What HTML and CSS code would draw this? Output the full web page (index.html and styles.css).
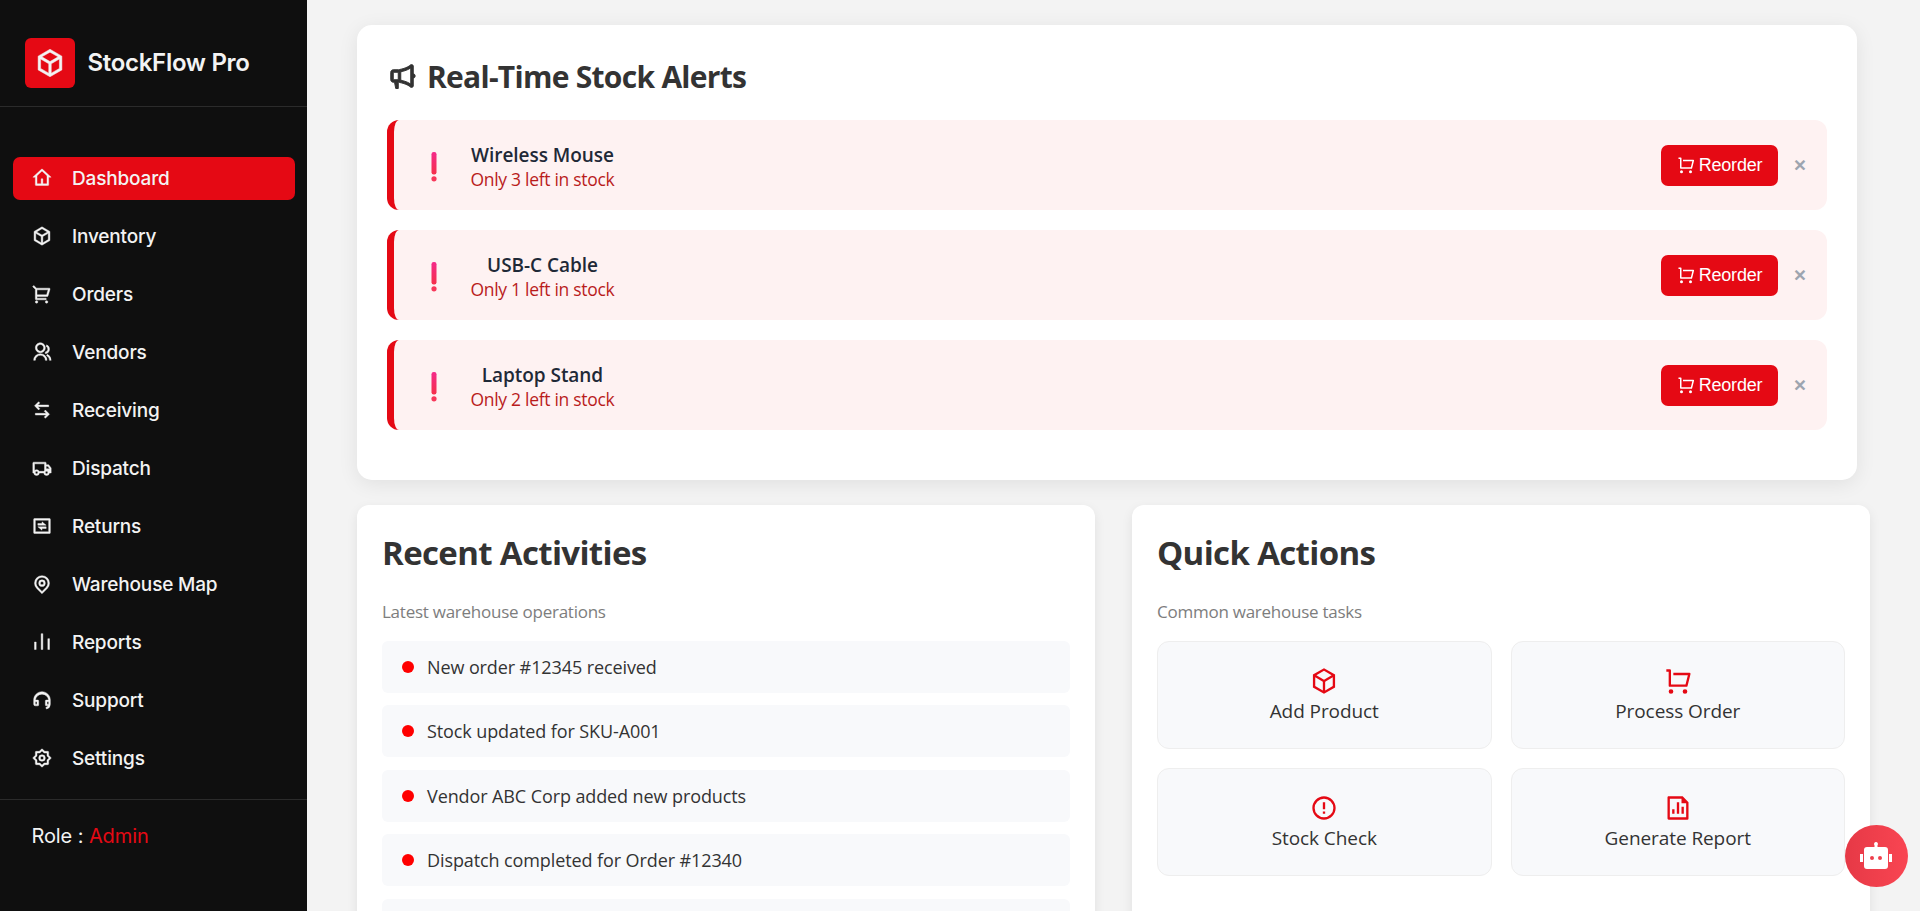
FILE: index.html
```html
<!DOCTYPE html>
<html lang="en">
<head>
<meta charset="utf-8">
<title>StockFlow Pro</title>
<link rel="stylesheet" href="styles.css">
</head>
<body>
<svg class="sprite" aria-hidden="true">
  <symbol id="box" viewBox="0 0 24 24"><path d="M12 1L21.5 6.5V17.5L12 23L2.5 17.5V6.5L12 1ZM5.494 7.078L12 10.844L18.506 7.078L12 3.311L5.494 7.078ZM4.5 8.813V16.347L11 20.11V12.577L4.5 8.813ZM13 20.11L19.5 16.347V8.813L13 12.577V20.11Z"/></symbol>
  <symbol id="home" viewBox="0 0 24 24"><path d="M19 21H5a1 1 0 0 1-1-1v-9H1l10.327-9.388a1 1 0 0 1 1.346 0L23 11h-3v9a1 1 0 0 1-1 1zm-6-2h5V9.157l-6-5.454-6 5.454V19h5v-6h2v6z"/></symbol>
  <symbol id="cart" viewBox="0 0 24 24"><path d="M4 6.414L.757 3.172l1.415-1.415L5.414 5h15.242a1 1 0 0 1 .958 1.287l-2.4 8a1 1 0 0 1-.958.713H6v2h11v2H5a1 1 0 0 1-1-1V6.414zM6 7v6h11.512l1.8-6H6zm-.5 16a1.5 1.5 0 1 1 0-3 1.5 1.5 0 0 1 0 3zm12 0a1.5 1.5 0 1 1 0-3 1.5 1.5 0 0 1 0 3z"/></symbol>
  <symbol id="cart2" viewBox="0 0 24 24"><path d="M4 16V4H2V2h3a1 1 0 0 1 1 1v12h12.438l2-8H8V5h13.72a1 1 0 0 1 .97 1.243l-2.5 10a1 1 0 0 1-.97.757H5a1 1 0 0 1-1-1zm2 7a2 2 0 1 1 0-4 2 2 0 0 1 0 4zm12 0a2 2 0 1 1 0-4 2 2 0 0 1 0 4z"/></symbol>
  <symbol id="group" viewBox="0 0 24 24"><path d="M2 22a8 8 0 1 1 16 0h-2a6 6 0 1 0-12 0H2zm8-9c-3.315 0-6-2.685-6-6s2.685-6 6-6 6 2.685 6 6-2.685 6-6 6zm0-2c2.21 0 4-1.79 4-4s-1.79-4-4-4-4 1.79-4 4 1.79 4 4 4zm8.284 3.703A8.002 8.002 0 0 1 23 22h-2a6.001 6.001 0 0 0-3.537-5.473l.82-1.824zm-.688-11.29A5.5 5.5 0 0 1 21 8.5a5.499 5.499 0 0 1-5 5.478v-2.013a3.5 3.5 0 0 0 1.041-6.609l.555-1.943z"/></symbol>
  <symbol id="arrows" viewBox="0 0 24 24"><path d="M16.05 12.05L21 17l-4.95 4.95-1.414-1.415L17.172 18H4v-2h13.172l-2.536-2.536L16.05 12.05zM7.95 2.05l1.414 1.414L6.828 6H20v2H6.828l2.536 2.535L7.95 11.95 3 7l4.95-4.95z"/></symbol>
  <symbol id="truck" viewBox="0 0 24 24"><path d="M8.965 18a3.5 3.5 0 0 1-6.93 0H1V6a1 1 0 0 1 1-1h14a1 1 0 0 1 1 1v2h3l3 4.056V18h-2.035a3.5 3.5 0 0 1-6.93 0h-5.07zM15 7H3v8.05a3.5 3.5 0 0 1 5.663.95h5.674c.168-.353.393-.674.663-.95V7zm2 6h4v-.285L18.992 10H17v3zm.5 6a1.5 1.5 0 1 0 0-3.001 1.5 1.5 0 0 0 0 3.001zM7 17.5a1.5 1.5 0 1 0-3 0 1.5 1.5 0 0 0 3 0z"/></symbol>
  <symbol id="exchange" viewBox="0 0 24 24"><path d="M3 3h18a1 1 0 0 1 1 1v16a1 1 0 0 1-1 1H3a1 1 0 0 1-1-1V4a1 1 0 0 1 1-1zm1 2v14h16V5H4zm8 4V7l5 4H7V9h5zm-5 4h10v2h-5v2l-5-4z"/></symbol>
  <symbol id="pin" viewBox="0 0 24 24"><path d="M12 23.728l-6.364-6.364a9 9 0 1 1 12.728 0L12 23.728zm4.95-7.778a7 7 0 1 0-9.9 0L12 20.9l4.95-4.95zM12 15a4 4 0 1 1 0-8 4 4 0 0 1 0 8zm0-2a2 2 0 1 0 0-4 2 2 0 0 0 0 4z"/></symbol>
  <symbol id="bars" viewBox="0 0 24 24"><path d="M3 12h2v9H3v-9zm16-4h2v13h-2V8zm-8-6h2v19h-2V2z"/></symbol>
  <symbol id="headset" viewBox="0 0 24 24"><path d="M22 17.002a6.002 6.002 0 0 1-4.713 5.86l-.638-1.914A4.003 4.003 0 0 0 19.465 19H17a1 1 0 0 1-1-1v-5a1 1 0 0 1 1-1h2.938a8.001 8.001 0 0 0-15.876 0H7a1 1 0 0 1 1 1v5a1 1 0 0 1-1 1H4a2 2 0 0 1-2-2v-5C2 6.477 6.477 2 12 2s10 4.477 10 10v5.002zM20 17v-3h-2v3h2zM4 14v3h2v-3H4z"/></symbol>
  <symbol id="gear" viewBox="0 0 24 24"><path d="M8.686 4l2.607-2.607a1 1 0 0 1 1.414 0L15.314 4H19a1 1 0 0 1 1 1v3.686l2.607 2.607a1 1 0 0 1 0 1.414L20 15.314V19a1 1 0 0 1-1 1h-3.686l-2.607 2.607a1 1 0 0 1-1.414 0L8.686 20H5a1 1 0 0 1-1-1v-3.686l-2.607-2.607a1 1 0 0 1 0-1.414L4 8.686V5a1 1 0 0 1 1-1h3.686zM6 6v3.515L3.515 12 6 14.485V18h3.515L12 20.485 14.485 18H18v-3.515L20.485 12 18 9.515V6h-3.515L12 3.515 9.515 6H6zm6 10a4 4 0 1 1 0-8 4 4 0 0 1 0 8zm0-2a2 2 0 1 0 0-4 2 2 0 0 0 0 4z"/></symbol>
  <symbol id="megaphone" viewBox="0 0 24 24"><path d="M9 17C9 17 16 18 19 21H20C20.552 21 21 20.552 21 20V13.937C21.863 13.715 22.5 12.932 22.5 12C22.5 11.068 21.863 10.285 21 10.063V4C21 3.448 20.552 3 20 3H19C16 6 9 7 9 7H5C3.895 7 3 7.895 3 9V15C3 16.105 3.895 17 5 17H6L7 22H9V17ZM11 8.661C11.683 8.515 12.528 8.312 13.439 8.044C15.118 7.55 17.25 6.773 19 5.575V18.425C17.25 17.227 15.118 16.45 13.439 15.956C12.528 15.688 11.683 15.485 11 15.339V8.661ZM5 9H9V15H5V9Z"/></symbol>
  <symbol id="warning" viewBox="0 0 24 24"><path d="M12 22C6.477 22 2 17.523 2 12S6.477 2 12 2s10 4.477 10 10-4.477 10-10 10zm0-2a8 8 0 1 0 0-16 8 8 0 0 0 0 16zm-1-5h2v2h-2v-2zm0-8h2v6h-2V7z"/></symbol>
  <symbol id="report" viewBox="0 0 24 24"><path d="M11 7h2v10h-2V7zm4 4h2v6h-2v-6zm-8 2h2v4H7v-4zm8-9H5v16h14V8h-4V4zM3 2.992C3 2.444 3.447 2 3.999 2H16l5 5v13.993A1 1 0 0 1 20.007 22H3.993A1 1 0 0 1 3 21.008V2.992z"/></symbol>
  <linearGradient id="bang-fill" x1="0" y1="0" x2="0" y2="1"><stop offset="0" stop-color="#f42a8a"/><stop offset="1" stop-color="#f5304a"/></linearGradient>
  <symbol id="bang" viewBox="0 0 6 30"><rect x=".5" y="0" width="5" height="22.4" rx="2.2" fill="url(#bang-fill)"/><circle cx="3" cy="26.8" r="2.6" fill="#f7385a"/></symbol>
</svg>

<div class="layout">
  <aside class="sidebar">
    <div class="brand">
      <span class="logo"><svg class="icon"><use href="#box"/></svg></span>
      <span class="brand-name">StockFlow Pro</span>
    </div>
    <nav class="nav">
      <a class="nav-item active"><svg class="icon"><use href="#home"/></svg><span>Dashboard</span></a>
      <a class="nav-item"><svg class="icon"><use href="#box"/></svg><span>Inventory</span></a>
      <a class="nav-item"><svg class="icon"><use href="#cart"/></svg><span>Orders</span></a>
      <a class="nav-item"><svg class="icon"><use href="#group"/></svg><span>Vendors</span></a>
      <a class="nav-item"><svg class="icon"><use href="#arrows"/></svg><span>Receiving</span></a>
      <a class="nav-item"><svg class="icon"><use href="#truck"/></svg><span>Dispatch</span></a>
      <a class="nav-item"><svg class="icon"><use href="#exchange"/></svg><span>Returns</span></a>
      <a class="nav-item"><svg class="icon"><use href="#pin"/></svg><span>Warehouse Map</span></a>
      <a class="nav-item"><svg class="icon"><use href="#bars"/></svg><span>Reports</span></a>
      <a class="nav-item"><svg class="icon"><use href="#headset"/></svg><span>Support</span></a>
      <a class="nav-item"><svg class="icon"><use href="#gear"/></svg><span>Settings</span></a>
    </nav>
    <div class="role">Role : <span class="role-name">Admin</span></div>
  </aside>

  <main class="content">
    <section class="alerts">
      <h2 class="alerts-title"><svg class="icon"><use href="#megaphone"/></svg><span class="alerts-heading">Real-Time Stock Alerts</span></h2>
      <div class="alert">
        <svg class="bang"><use href="#bang"/></svg>
        <div class="alert-text"><div class="alert-name">Wireless Mouse</div><div class="alert-note">Only 3 left in stock</div></div>
        <button class="reorder"><svg class="icon"><use href="#cart2"/></svg><span>Reorder</span></button>
        <button class="close">✕</button>
      </div>
      <div class="alert">
        <svg class="bang"><use href="#bang"/></svg>
        <div class="alert-text"><div class="alert-name">USB-C Cable</div><div class="alert-note">Only 1 left in stock</div></div>
        <button class="reorder"><svg class="icon"><use href="#cart2"/></svg><span>Reorder</span></button>
        <button class="close">✕</button>
      </div>
      <div class="alert">
        <svg class="bang"><use href="#bang"/></svg>
        <div class="alert-text"><div class="alert-name">Laptop Stand</div><div class="alert-note">Only 2 left in stock</div></div>
        <button class="reorder"><svg class="icon"><use href="#cart2"/></svg><span>Reorder</span></button>
        <button class="close">✕</button>
      </div>
    </section>

    <div class="panels">
      <section class="panel">
        <h2 class="panel-title">Recent Activities</h2>
        <p class="panel-sub">Latest warehouse operations</p>
        <ul class="activity-list">
          <li class="activity"><span class="dot"></span><span>New order #12345 received</span></li>
          <li class="activity"><span class="dot"></span><span>Stock updated for SKU-A001</span></li>
          <li class="activity"><span class="dot"></span><span>Vendor ABC Corp added new products</span></li>
          <li class="activity"><span class="dot"></span><span>Dispatch completed for Order #12340</span></li>
          <li class="activity"></li>
        </ul>
      </section>
      <section class="panel">
        <h2 class="panel-title">Quick Actions</h2>
        <p class="panel-sub">Common warehouse tasks</p>
        <div class="actions">
          <button class="action"><svg class="icon"><use href="#box"/></svg><span>Add Product</span></button>
          <button class="action"><svg class="icon"><use href="#cart2"/></svg><span>Process Order</span></button>
          <button class="action"><svg class="icon"><use href="#warning"/></svg><span>Stock Check</span></button>
          <button class="action"><svg class="icon"><use href="#report"/></svg><span>Generate Report</span></button>
        </div>
      </section>
    </div>
  </main>
</div>
<button class="chatbot">
  <svg class="robot" viewBox="0 0 32 27"><path fill="#fff" fill-rule="evenodd" d="M16 0a2 2 0 0 1 1.5 3.3V5H25a3 3 0 0 1 3 3v16a3 3 0 0 1-3 3H7a3 3 0 0 1-3-3V8a3 3 0 0 1 3-3h7.5V3.3A2 2 0 0 1 16 0zM12 14a2 2 0 1 0 .01 4A2 2 0 0 0 12 14zm8 0a2 2 0 1 0 .01 4A2 2 0 0 0 20 14zM0 12h3v8H0zM29 12h3v8h-3z"/></svg>
</button>
</body>
</html>
```

FILE: styles.css
```css
* { box-sizing: border-box; }
html, body { height: 100%; }
body { margin: 0; overflow: hidden; background: #f3f3f3; color: #333; font-family: "Open Sans", "Noto Sans", sans-serif; }
h2, p, ul { margin: 0; padding: 0; }
button { border: 0; padding: 0; font: inherit; color: inherit; background: none; }
.sprite { position: absolute; width: 0; height: 0; }
.icon { display: block; flex: none; fill: currentColor; }
.layout { display: flex; height: 100%; overflow: hidden; }

.sidebar { width: 307px; flex: none; background: #0f0f0f; color: #f3f3f3; font-family: Inter, sans-serif; }
.brand { display: flex; align-items: center; gap: 12.5px; height: 107px; padding: 19px 25px 0; border-bottom: 1px solid #2b2b2b; }
.logo { display: flex; align-items: center; justify-content: center; width: 50px; height: 50px; border-radius: 6px; background: #e50914; }
.logo .icon { width: 30px; height: 30px; stroke: currentColor; stroke-width: .4px; }
.brand-name { font-size: 24px; font-weight: 600; letter-spacing: -0.3px; white-space: nowrap; }
.nav { display: flex; flex-direction: column; gap: 15px; height: 692px; padding: 50px 12px 0 13px; }
.nav-item { display: flex; align-items: center; gap: 20px; flex: none; height: 43px; padding-left: 19px; border-radius: 7px; font-size: 19px; font-weight: 500; letter-spacing: -.17px; white-space: nowrap; }
.nav-item.active { background: #e50914; }
.nav-item .icon { width: 20px; height: 20px; margin-bottom: 1px; stroke: currentColor; stroke-width: .5px; }
.role { height: 112px; padding: 23px 31.5px; border-top: 1px solid #2b2b2b; font-size: 20px; line-height: 26px; letter-spacing: -.1px; }
.role-name { color: #e50914; }

.content { flex: 1; padding: 25px 0 0 50px; }
.alerts { width: 1500px; height: 455px; padding: 29px 30px 30px; border-radius: 15px; background: #fff; box-shadow: 0 4px 20px rgba(0,0,0,.08); }
.alerts-title { display: flex; align-items: center; gap: 10px; height: 44px; margin-bottom: 22px; font-size: 30px; font-weight: 700; white-space: nowrap; }
.alerts-title .icon { width: 30px; height: 30px; stroke: currentColor; stroke-width: .8px; }
.alerts-heading { letter-spacing: -.72px; }
.alert { display: flex; align-items: center; height: 90px; margin-bottom: 20px; padding: 0 20px 0 37px; border-left: 7px solid #e50914; border-radius: 12px; background: #fef2f2; }
.bang { width: 6px; height: 30px; margin-top: 3px; }
.alert-text { margin: 3px auto 0 33.5px; text-align: center; white-space: nowrap; }
.alert-name { font-size: 19px; line-height: 24px; font-weight: 600; color: #1f2937; letter-spacing: -.05px; }
.alert-note { font-size: 17.5px; line-height: 24px; color: #b91c1c; letter-spacing: -.3px; }
.reorder { display: flex; align-items: center; justify-content: center; gap: 4px; width: 117px; height: 41px; border-radius: 7px; background: #e50914; color: #fff; font: 18px "Liberation Sans", sans-serif; letter-spacing: -.2px; }
.reorder .icon { width: 18px; height: 18px; }
.close { margin-left: 15px; width: 14px; text-align: center; color: #9ca3af; font: 700 16px "DejaVu Sans", sans-serif; -webkit-text-stroke: .7px #9ca3af; }

.panels { display: grid; grid-template-columns: 738px 738px; gap: 37px; margin-top: 25px; }
.panel { height: 460px; padding: 24px 25px; border-radius: 12px; background: #fff; box-shadow: 0 4px 12px rgba(0,0,0,.08); }
.panel-title { font-size: 33px; line-height: 48px; font-weight: 700; letter-spacing: -.65px; }
.panel-sub { margin: 21px 0 16px; font-size: 17px; line-height: 27px; color: #7d7d7d; letter-spacing: -.25px; }
.activity-list { display: flex; flex-direction: column; gap: 12.4px; list-style: none; }
.activity { display: flex; align-items: center; gap: 13px; height: 52px; padding: 0 20px; border-radius: 6px; background: #f8f9fb; font-size: 18px; letter-spacing: -.1px; white-space: nowrap; }
.dot { width: 12px; height: 12px; border-radius: 50%; background: red; }
.actions { display: grid; grid-template-columns: 1fr 1fr; gap: 19px; }
.action { display: flex; flex-direction: column; align-items: center; gap: 2px; height: 108px; padding-top: 25px; border: 1px solid #eee; border-radius: 12px; background: #f8f9fb; font-size: 19px; line-height: 28px; letter-spacing: -.08px; }
.action .icon { width: 28px; height: 28px; color: #e50914; }
.chatbot { position: fixed; right: 12px; bottom: 24px; width: 63px; height: 62px; display: flex; align-items: center; justify-content: center; padding: 0 1px 2px 0; border-radius: 50%; background: linear-gradient(90deg, #e63946, #f94552); }
.robot { width: 32px; height: 27px; }
```
